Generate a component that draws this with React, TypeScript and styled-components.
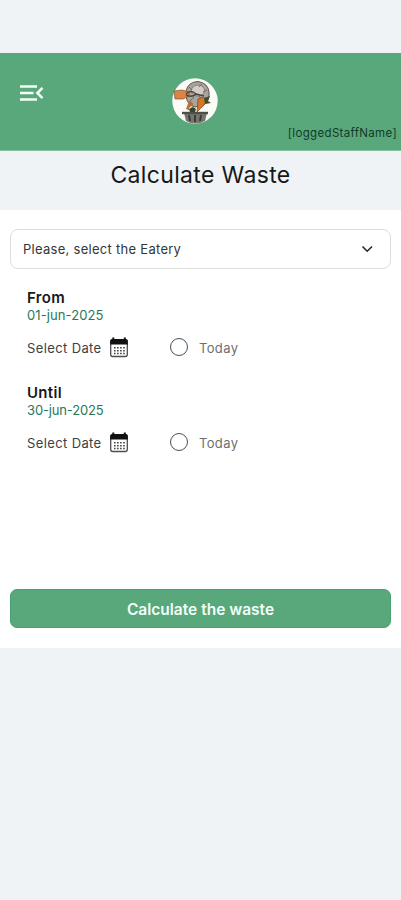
import React from 'react';
import styled, { createGlobalStyle } from 'styled-components';

const GlobalStyle = createGlobalStyle`
  * { box-sizing: border-box; }
  body { margin: 0; background: #eff3f6; font-family: Inter, sans-serif; color: #16181a; }
  button { font-family: inherit; cursor: pointer; }
  svg { display: block; flex: none; }
`;

const Screen = styled.div`
  min-height: 900px;
  padding-top: 53px;
  background: #eff3f6;
`;

const Header = styled.header`
  height: 98px;
  display: grid;
  grid-template-columns: 172px 46px 1fr;
  background: #58a87b;
  border-bottom: 1px solid #83bf9e;
`;

const MenuButton = styled.button`
  justify-self: start;
  align-self: start;
  margin: 31px 0 0 19px;
  padding: 0;
  border: 0;
  background: none;
`;

const Logo = styled.div`
  padding-top: 25px;
`;

const StaffName = styled.span`
  align-self: end;
  justify-self: end;
  margin: 0 4px 9px 0;
  font-size: 11.5px;
  line-height: 16px;
  letter-spacing: 0.34px;
  white-space: nowrap;
  color: #123b27;
`;

const Title = styled.h1`
  margin: 0;
  height: 59px;
  padding-top: 9px;
  text-align: center;
  font-size: 23px;
  line-height: 30px;
  font-weight: 400;
  letter-spacing: 0.35px;
`;

const Panel = styled.main`
  height: 438px;
  padding: 19px 10px 20px;
  display: flex;
  flex-direction: column;
  background: #fff;
`;

const Select = styled.button`
  height: 40px;
  padding: 0 16px 0 12px;
  display: flex;
  align-items: center;
  justify-content: space-between;
  border: 1px solid #dcdede;
  border-radius: 8px;
  background: #fff;
  color: #333638;
  font-size: 13px;
  letter-spacing: 0.28px;
`;

const DateGroup = styled.section<{ $gap: number }>`
  margin-top: ${p => p.$gap}px;
  padding-left: 17px;
`;

const GroupName = styled.h2`
  margin: 0;
  font-size: 15px;
  line-height: 18px;
  font-weight: 600;
  letter-spacing: 0.3px;
`;

const DateValue = styled.div<{ $spacing: number }>`
  font-size: 13px;
  line-height: 17px;
  letter-spacing: ${p => p.$spacing}px;
  color: #25795b;
`;

const Options = styled.div`
  height: 22px;
  margin-top: 12px;
  display: grid;
  grid-template-columns: 82px 61px 1fr;
  align-items: center;
`;

const OptionText = styled.span<{ $muted?: boolean }>`
  padding-top: 1px;
  font-size: 13px;
  letter-spacing: ${p => (p.$muted ? 0.35 : 0.38)}px;
  color: ${p => (p.$muted ? '#6d7072' : '#3d4042')};
`;

const TodayOption = styled.label`
  display: flex;
  align-items: center;
  gap: 11px;
`;

const Radio = styled.span`
  width: 18px;
  height: 18px;
  border: 1.5px solid #43525a;
  border-radius: 50%;
`;

const SubmitButton = styled.button`
  height: 39px;
  margin-top: auto;
  padding-top: 3px;
  border: 1px solid #4a9f6f;
  border-radius: 7px;
  background: #58a87b;
  color: #f4fff8;
  font-size: 15.5px;
  font-weight: 600;
`;

const MenuIcon = () => (
  <svg width="26" height="18" viewBox="0 0 26 18" fill="none" stroke="#f3fff8" strokeWidth="2.5">
    <path d="M1 2.5H18M1 9H14.5M1 15.5H18" />
    <path d="M23.5 3.8L18.3 9L23.5 14.2" />
  </svg>
);

const EateryLogo = () => (
  <svg width="46" height="46" viewBox="0 0 46 46">
    <circle cx="23" cy="23" r="22.7" fill="#fbfcf8" />
    <path d="M14 13Q16 4 26 3.5Q36 5 37 14Q38 22 32 27L23 29Q15 27 14 18Z" fill="#aaa59c" stroke="#5b554c" strokeWidth="1" />
    <ellipse cx="26" cy="12.5" rx="6.5" ry="5.5" fill="#d2cec6" stroke="#827d74" />
    <path d="M17 9L20 12M30 6L27 9M35 12L31 14M17 24L22 19M30 22L27 18" stroke="#716b61" />
    <path d="M2 13L10 12L17 14V18L11 21H3Z" fill="#d98547" stroke="#805030" strokeWidth="0.7" />
    <path d="M14 16Q19 11 24 16Q20 20 14 17M24 16L32 18" fill="none" stroke="#4b4540" strokeWidth="1.4" />
    <path d="M26 21Q33 17 35 23L31 28L25 34Z" fill="#d87328" stroke="#7b4825" strokeWidth="0.7" />
    <path d="M32 20L38 18L36 23L39 25L33 26Z" fill="#3d4d2d" />
    <path d="M17 23Q21 23 21 27L17 30L19 33L14 31Z" fill="#b77039" />
    <path d="M18 34Q16 30 21 29L24 31L23 34Z" fill="#30452c" />
    <path d="M12 35L14 43Q23 48 33 43L35 35Z" fill="#77766c" />
    <path d="M10 35H36" stroke="#4c5049" strokeWidth="2.4" />
    <path d="M17 37L18 43M23 37V44M29 37L28 43" stroke="#393e36" strokeWidth="2" />
  </svg>
);

const ChevronIcon = () => (
  <svg width="14" height="12" viewBox="0 0 14 12" fill="none" stroke="#24282a" strokeWidth="1.6">
    <path d="M2.5 3.5L7.2 8.2L12 3.5" />
  </svg>
);

const CalendarIcon = () => (
  <svg width="20" height="22" viewBox="0 0 20 22">
    <rect x="1.7" y="4" width="16.6" height="16.5" rx="2" fill="#fff" stroke="#4b4e50" strokeWidth="1.3" />
    <path d="M1.2 8V5Q1.2 3 3.2 3H16.8Q18.8 3 18.8 5V8.5H1.2Z" fill="#111" />
    <path d="M4.3 1.5V5M15.8 1.5V5" stroke="#111" strokeWidth="2" />
    <path d="M5 11.8H16M5 14.7H16M5 17.6H16" stroke="#414345" strokeWidth="1.5" strokeDasharray="1.6 1.45" />
  </svg>
);

const DateSection = ({ name, date, gap, spacing }: { name: string; date: string; gap: number; spacing: number }) => (
  <DateGroup $gap={gap}>
    <GroupName>{name}</GroupName>
    <DateValue $spacing={spacing}>{date}</DateValue>
    <Options>
      <OptionText>Select Date</OptionText>
      <CalendarIcon />
      <TodayOption>
        <Radio />
        <OptionText $muted>Today</OptionText>
      </TodayOption>
    </Options>
  </DateGroup>
);

export default function App() {
  return (
    <Screen>
      <GlobalStyle />
      <Header>
        <MenuButton aria-label="Menu"><MenuIcon /></MenuButton>
        <Logo><EateryLogo /></Logo>
        <StaffName>[loggedStaffName]</StaffName>
      </Header>
      <Title>Calculate Waste</Title>
      <Panel>
        <Select><span>Please, select the Eatery</span><ChevronIcon /></Select>
        <DateSection name="From" date="01-jun-2025" gap={20} spacing={0.1} />
        <DateSection name="Until" date="30-jun-2025" gap={26} spacing={-0.15} />
        <SubmitButton>Calculate the waste</SubmitButton>
      </Panel>
    </Screen>
  );
}
